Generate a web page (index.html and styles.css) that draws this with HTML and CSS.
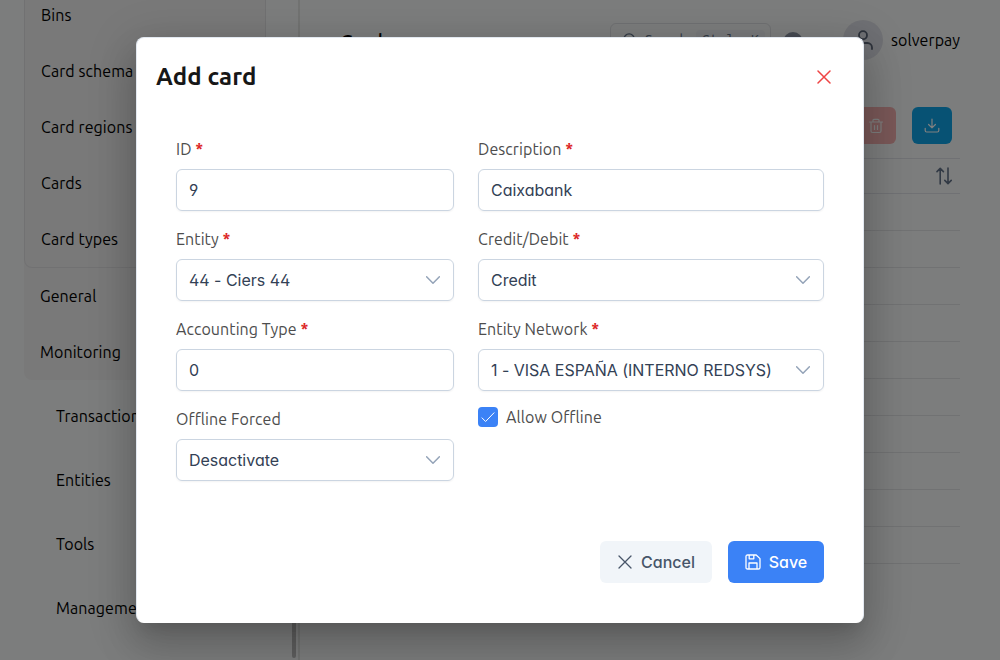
FILE: index.html
```html
<!DOCTYPE html>
<html lang="en">
<head>
<meta charset="utf-8">
<title>Add card</title>
<link rel="stylesheet" href="styles.css">
</head>
<body>
<div class="app">
  <aside class="sidebar">
    <div class="menu-group">
      <ul class="submenu">
        <li>Bins</li><li>Card schema</li><li>Card regions</li><li>Cards</li><li>Card types</li>
      </ul>
      <div class="group-item">General</div>
      <div class="group-item">Monitoring</div>
    </div>
    <nav class="main-menu">
      <a>Transactions</a><a>Entities</a><a>Tools</a><a>Management</a>
    </nav>
    <div class="scroll-thumb"></div>
  </aside>
  <main class="content">
    <header class="topbar">
      <h1 class="page-title">Cards</h1>
      <div class="search">
        <svg width="14" height="14" viewBox="0 0 16 16"><circle cx="7" cy="7" r="6"/><path d="M11.500 11.500l4 4"/></svg>
        <span>Search</span><kbd>Ctrl+ K</kbd>
      </div>
      <div class="theme-dot"></div>
      <div class="avatar"><svg width="20" height="20" viewBox="0 0 20 20"><circle cx="10" cy="5.200" r="4"/><path d="M1 19v-1.500a4.500 4.500 0 0 1 4.500-4.500h9a4.500 4.500 0 0 1 4.500 4.500V19"/></svg></div>
      <span class="username">solverpay</span>
    </header>
    <div class="toolbar">
      <button class="tool delete"><svg width="16" height="16" viewBox="0 0 16 16"><path d="M1.500 4h13M5 3.800V2.300q0-1 1-1h4q1 0 1 1v1.500M3 4.200v8.800q0 1.500 1.500 1.500h7q1.500 0 1.500-1.500V4.200M6.500 7.500v4M9.500 7.500v4"/></svg></button>
      <button class="tool download"><svg width="16" height="16" viewBox="0 0 16 16"><path d="M8 1v8.800M4.600 6.500L8 9.900 11.400 6.500M1.200 10.300v2.200q0 1.500 1.500 1.500h10.600q1.500 0 1.500-1.500v-2.200"/></svg></button>
    </div>
    <div class="table">
      <div class="thead"><svg width="16" height="18" viewBox="0 0 16 18"><path d="M4.200 17V1.500M1 4.600l3.200-3.200 3.200 3.200M12 1v15.500M8.800 13.400l3.200 3.200 3.200-3.200"/></svg></div>
      <div class="row"></div><div class="row"></div><div class="row"></div><div class="row"></div><div class="row"></div>
      <div class="row"></div><div class="row"></div><div class="row"></div><div class="row"></div><div class="row"></div>
    </div>
  </main>
</div>
<div class="mask">
  <section class="dialog" role="dialog">
    <header class="dialog-head">
      <h2>Add card</h2>
      <svg class="close" width="14" height="14" viewBox="0 0 14 14"><path d="M1 1l12 12M13 1L1 13"/></svg>
    </header>
    <div class="form">
      <div class="field"><label>ID <b>*</b></label><div class="input">9</div></div>
      <div class="field"><label>Description <b>*</b></label><div class="input">Caixabank</div></div>
      <div class="field"><label>Entity <b>*</b></label><div class="input">44 - Ciers 44<svg class="chevron" width="14" height="14" viewBox="0 0 14 14"><path d="M.6 3.800L7 10.200l6.400-6.400"/></svg></div></div>
      <div class="field"><label>Credit/Debit <b>*</b></label><div class="input">Credit<svg class="chevron" width="14" height="14" viewBox="0 0 14 14"><path d="M.6 3.800L7 10.200l6.400-6.400"/></svg></div></div>
      <div class="field"><label>Accounting Type <b>*</b></label><div class="input">0</div></div>
      <div class="field"><label>Entity Network <b>*</b></label><div class="input">1 - VISA ESPAÑA (INTERNO REDSYS)<svg class="chevron" width="14" height="14" viewBox="0 0 14 14"><path d="M.6 3.800L7 10.200l6.400-6.400"/></svg></div></div>
      <div class="field"><label>Offline Forced</label><div class="input">Desactivate<svg class="chevron" width="14" height="14" viewBox="0 0 14 14"><path d="M.6 3.800L7 10.200l6.400-6.400"/></svg></div></div>
      <div class="check"><span class="box"><svg width="14" height="14" viewBox="0 0 14 14"><path d="M1 7.900l3.600 3.600L13 2.800"/></svg></span><span>Allow Offline</span></div>
    </div>
    <footer class="actions">
      <button class="btn cancel"><svg width="16" height="16" viewBox="0 0 16 16"><path d="M2 2l12 12M14 2L2 14"/></svg>Cancel</button>
      <button class="btn save"><svg width="16" height="16" viewBox="0 0 16 16"><path d="M2.600 1h8.600L15 4.600v8.800q0 1.600-1.600 1.600H2.600Q1 15 1 13.400V2.600Q1 1 2.600 1zM4.200 1.200v3.600h4.600V1.200M4 14.800V9h8v5.800"/></svg>Save</button>
    </footer>
  </section>
</div>
</body>
</html>
```
FILE: styles.css
```css
* { box-sizing: border-box; }
body { margin: 0; height: 660px; overflow: hidden; background: #f9fbfa; color: #000; font: 16px/24px Ubuntu, "Noto Sans", sans-serif; letter-spacing: .08px; }
ul { list-style: none; margin: 0; padding: 0; }
button { border: 0; padding: 0; font: inherit; }
svg { fill: none; stroke: currentColor; stroke-linecap: round; stroke-linejoin: round; flex: none; }
.app { display: flex; height: 660px; overflow: hidden; }
.sidebar { position: relative; width: 300px; flex: none; padding: 0 32px 0 24px; border-right: 2px solid #e4e6e5; }
.menu-group { margin-top: -13px; background: #f2f2f2; border-radius: 8px; }
.submenu { border: 1px solid #e3e3e5; border-top: 0; border-radius: 0 0 8px 8px; }
.submenu li { height: 56px; padding-left: 16px; line-height: 56px; }
.group-item { height: 56px; padding-left: 16px; line-height: 56px; }
.main-menu { display: flex; flex-direction: column; padding: 4px 0 0 32px; }
.main-menu a { height: 64px; line-height: 64px; }
.scroll-thumb { position: absolute; left: 292px; top: 440px; width: 4px; height: 218px; border-radius: 2px; background: #bcbcbc; }
.content { flex: 1; padding: 20px 40px 0; }
.topbar { display: flex; align-items: center; height: 40px; }
.page-title { margin: 0; padding-top: 3px; flex: 1; font-size: 20px; line-height: 28px; font-weight: 500; color: #000; letter-spacing: 0; }
.search { display: flex; align-items: center; gap: 8px; width: 161px; height: 34px; padding: 0 12px; border: 1px solid #e0e2e6; border-radius: 6px; font-size: 14px; color: #64748b; white-space: nowrap; }
.search svg { stroke-width: 1.500; }
.search kbd { padding: 0 6px; margin-left: auto; background: #f1f2f6; border-radius: 4px; font: 14.500px/20px "Ubuntu Mono", "Liberation Mono", monospace; }
.theme-dot { width: 20px; height: 20px; margin: 4px 40px 0 12px; border-radius: 50%; background: #8d95a5; }
.avatar { display: flex; align-items: center; justify-content: center; width: 40px; height: 40px; border-radius: 50%; background: #dfe1e8; color: #5c6678; }
.avatar svg { stroke-width: 1.800; }
.username { width: 69px; margin-left: 8px; white-space: nowrap; }
.toolbar { display: flex; justify-content: flex-end; gap: 16px; padding: 47px 8px 14px 0; }
.tool { display: flex; align-items: center; justify-content: center; width: 40px; height: 37px; border-radius: 6px; color: #fff; }
.tool svg { stroke-width: 1.200; }
.delete { background: #ef4444; opacity: .4; }
.download { background: #0ea5e9; }
.thead { display: flex; justify-content: flex-end; align-items: center; height: 36px; padding-right: 8px; border: solid #e0e2e8; border-width: 1px 0; color: #64748b; }
.thead svg { stroke-width: 1.600; }
.row { height: 37px; border-bottom: 1px solid #e3e4e6; }
.mask { position: absolute; inset: 0; display: flex; justify-content: center; padding-top: 37px; background: rgba(0,0,0,.5); }
.dialog { width: 728px; height: 586px; padding: 24px 39px 0; border: 1px solid #e2e8f0; border-bottom-color: #fff; border-radius: 8px; background: #fff; box-shadow: 0 11px 15px -7px rgba(0,0,0,.1), 0 24px 38px 3px rgba(0,0,0,.14), 0 9px 46px 8px rgba(0,0,0,.12); color: #4d4d4d; }
.dialog-head { display: flex; justify-content: space-between; align-items: center; height: 30px; margin: 0 -7px 0 -20px; }
.dialog-head h2 { margin: 0; font-size: 24px; line-height: 30px; font-weight: 700; color: #171717; letter-spacing: .12px; }
.close { color: #ef4444; stroke-width: 1.500; }
.form { display: grid; grid-template-columns: 278px 346px; column-gap: 24px; row-gap: 16px; padding-top: 45px; }
.field { height: 74px; }
.field label { display: block; height: 32px; line-height: 24px; white-space: nowrap; }
.field b { color: #dc2626; }
.input { display: flex; align-items: center; justify-content: space-between; height: 42px; padding: 0 13px 0 12px; border: 1px solid #cbd5e1; border-radius: 6px; box-shadow: 0 1px 2px rgba(18,18,23,.05); color: #334155; font: 16px Inter, sans-serif; letter-spacing: -.02px; font-feature-settings: "cv02", "cv03", "cv04", "cv11"; white-space: nowrap; }
.chevron { color: #94a3b8; stroke-width: 1.500; }
.check { display: flex; align-items: center; gap: 8px; height: 20px; }
.box { display: flex; align-items: center; justify-content: center; width: 20px; height: 20px; border-radius: 4px; background: #3b82f6; color: #fff; }
.actions { display: flex; justify-content: flex-end; gap: 16px; margin-top: 60px; }
.btn { display: flex; align-items: center; justify-content: center; gap: 8px; height: 42px; border-radius: 6px; font: 500 16px Inter, sans-serif; letter-spacing: 0; font-feature-settings: "cv02", "cv03", "cv04", "cv11"; }
.btn svg { stroke-width: 1.300; }
.cancel { width: 112px; background: #f1f5f9; color: #475569; }
.save { width: 96px; background: #3b82f6; color: #fff; }
```
